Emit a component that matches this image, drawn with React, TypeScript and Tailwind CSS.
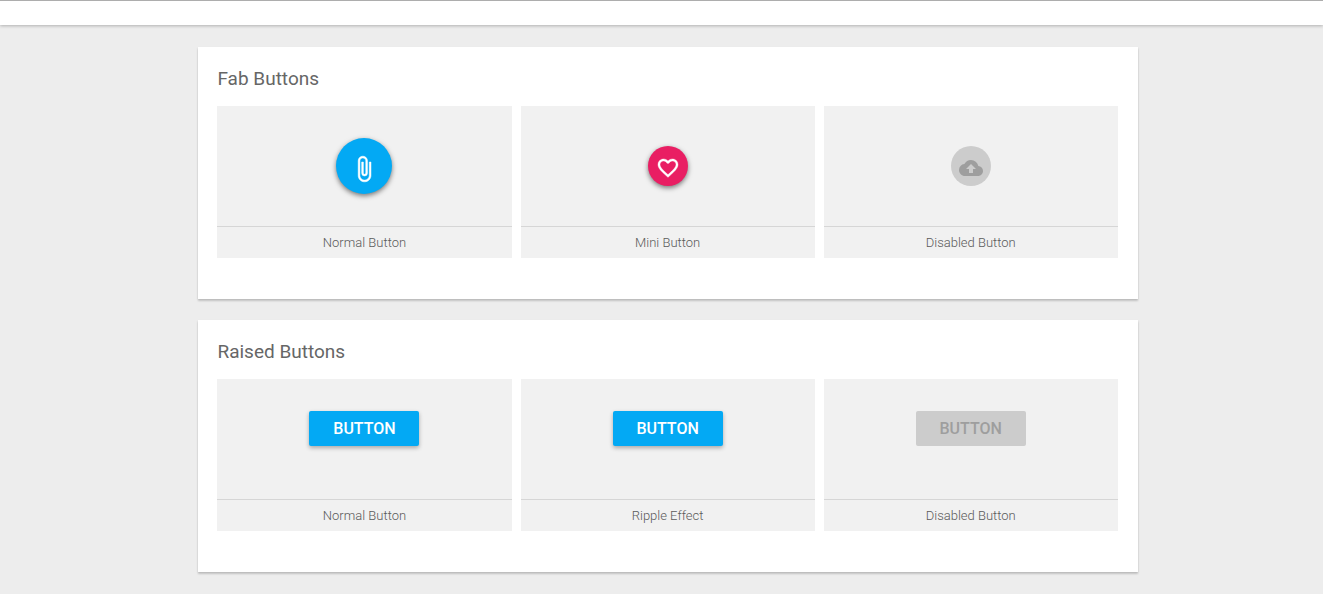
import type { ReactNode } from 'react';
import { MdCloudUpload } from 'react-icons/md';

function Card({ title, children }: { title: string; children: ReactNode }) {
  return (
    <section className="bg-white pt-[18px] pr-[20px] pb-[41px] pl-[19px] shadow-[0_2px_2px_rgba(0,0,0,0.15),0_1px_2px_rgba(0,0,0,0.1)]">
      <h2 className="mb-[14px] text-[19px] leading-[27px] font-normal text-[#666666]">{title}</h2>
      <div className="grid grid-cols-3 gap-[9px]">{children}</div>
    </section>
  );
}

function Demo({ label, children }: { label: string; children: ReactNode }) {
  return (
    <figure className="bg-[#f1f1f1]">
      <div className="flex h-[120px] items-start justify-center pt-8">{children}</div>
      <figcaption className="border-t border-[#d6d6d6] pt-1.5 pb-[5px] text-center text-[13px] leading-5 font-light text-[#5a5a5a]">
        {label}
      </figcaption>
    </figure>
  );
}

function ClipIcon() {
  return (
    <svg viewBox="0 0 24 24" className="size-7 fill-current stroke-current stroke-[0.4]" aria-hidden="true">
      <path d="M16.5 6v11.5c0 2.21-1.79 4-4 4s-4-1.79-4-4V5a2.5 2.5 0 0 1 5 0v10.5c0 .55-.45 1-1 1s-1-.45-1-1V6H10v9.5a2.5 2.5 0 0 0 5 0V5c0-2.21-1.79-4-4-4S7 2.79 7 5v12.5c0 3.04 2.46 5.5 5.5 5.5s5.5-2.46 5.5-5.5V6h-1.5z" />
    </svg>
  );
}

function HeartIcon() {
  return (
    <svg viewBox="0 0 24 24" className="size-6 fill-current stroke-current stroke-[0.4]" aria-hidden="true">
      <path d="M16.5 3c-1.74 0-3.41.81-4.5 2.09C10.91 3.81 9.24 3 7.5 3 4.42 3 2 5.42 2 8.5c0 3.78 3.4 6.86 8.55 11.54L12 21.35l1.45-1.32C18.6 15.36 22 12.28 22 8.5 22 5.42 19.58 3 16.5 3zm-4.4 15.55l-.1.1-.1-.1C7.14 14.24 4 11.39 4 8.5 4 6.5 5.5 5 7.5 5c1.54 0 3.04.99 3.57 2.36h1.87C13.46 5.99 14.96 5 16.5 5c2 0 3.5 1.5 3.5 3.5 0 2.89-3.14 5.74-7.9 10.05z" />
    </svg>
  );
}

const raised =
  'h-[35px] w-[110px] rounded-xs bg-[#03a9f4] text-base font-medium text-white uppercase shadow-[0_2px_4px_rgba(0,0,0,0.3)] disabled:bg-[#cccccc] disabled:text-[#9e9e9e] disabled:shadow-none';

export default function App() {
  return (
    <div className="min-h-screen bg-[#ededed] font-['Roboto',sans-serif]">
      <header className="h-[25px] border-t border-[#adadad] bg-white shadow-[0_1px_3px_rgba(0,0,0,0.25)]" />
      <main className="ml-[15%] flex w-[71%] flex-col gap-[21px] py-[22px]">
        <Card title="Fab Buttons">
          <Demo label="Normal Button">
            <button
              type="button"
              aria-label="Attach file"
              className="flex size-14 items-center justify-center rounded-full bg-[#03a9f4] pt-1.5 text-white shadow-[0_2px_5px_rgba(0,0,0,0.5)]"
            >
              <ClipIcon />
            </button>
          </Demo>
          <Demo label="Mini Button">
            <button
              type="button"
              aria-label="Favorite"
              className="mt-2 flex size-10 items-center justify-center rounded-full bg-[#e91e63] pt-1 text-white shadow-[0_2px_5px_rgba(0,0,0,0.5)]"
            >
              <HeartIcon />
            </button>
          </Demo>
          <Demo label="Disabled Button">
            <button
              type="button"
              disabled
              aria-label="Upload"
              className="mt-2 flex size-10 items-center justify-center rounded-full bg-[#cccccc] pt-1 text-[#9e9e9e]"
            >
              <MdCloudUpload size={24} />
            </button>
          </Demo>
        </Card>
        <Card title="Raised Buttons">
          <Demo label="Normal Button">
            <button type="button" className={raised}>Button</button>
          </Demo>
          <Demo label="Ripple Effect">
            <button type="button" className={raised}>Button</button>
          </Demo>
          <Demo label="Disabled Button">
            <button type="button" disabled className={raised}>Button</button>
          </Demo>
        </Card>
      </main>
    </div>
  );
}
